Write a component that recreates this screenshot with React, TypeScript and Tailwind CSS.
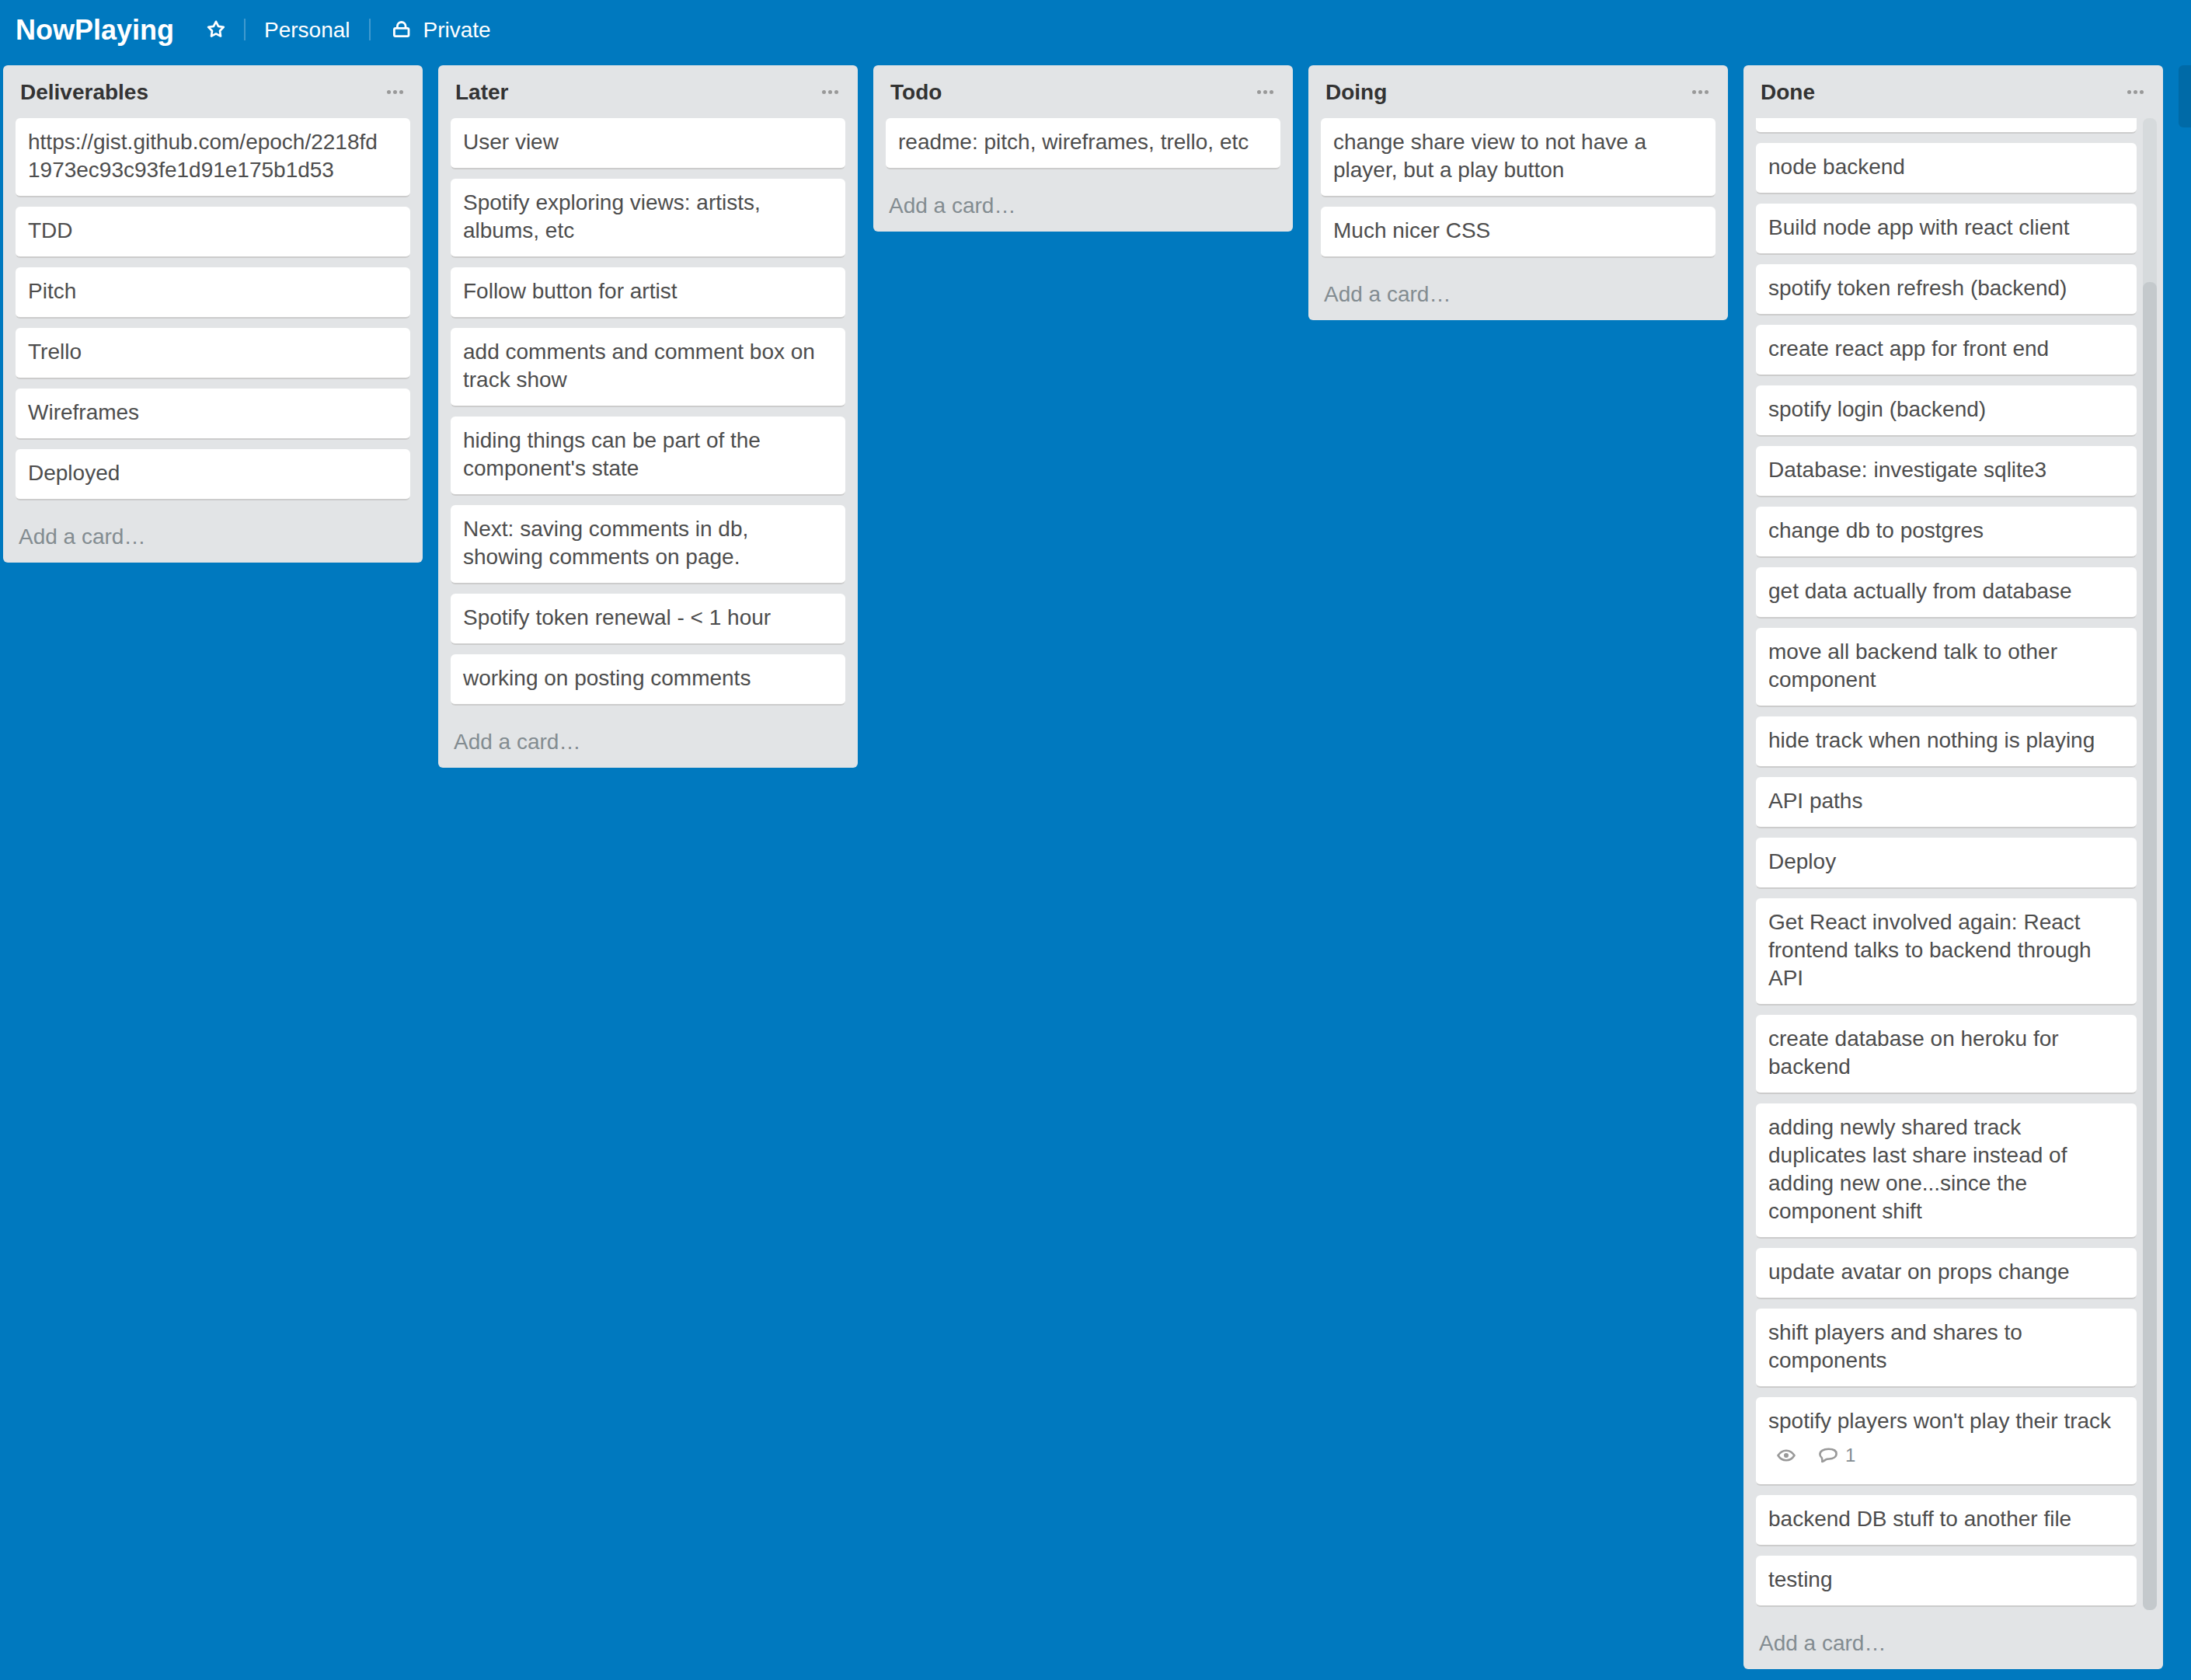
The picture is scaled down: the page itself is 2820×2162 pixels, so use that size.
import React from "react";

type CardData = { text: string; comments?: number };
type ListData = { title: string; cards: CardData[]; scrolled?: boolean };

const toCards = (texts: string[]): CardData[] => texts.map((text) => ({ text }));

const LISTS: ListData[] = [
  {
    title: "Deliverables",
    cards: toCards([
      "https://gist.github.com/epoch/2218fd\n1973ec93c93fe1d91e175b1d53",
      "TDD",
      "Pitch",
      "Trello",
      "Wireframes",
      "Deployed",
    ]),
  },
  {
    title: "Later",
    cards: toCards([
      "User view",
      "Spotify exploring views: artists, albums, etc",
      "Follow button for artist",
      "add comments and comment box on track show",
      "hiding things can be part of the component's state",
      "Next: saving comments in db, showing comments on page.",
      "Spotify token renewal - < 1 hour",
      "working on posting comments",
    ]),
  },
  { title: "Todo", cards: toCards(["readme: pitch, wireframes, trello, etc"]) },
  {
    title: "Doing",
    cards: toCards(["change share view to not have a player, but a play button", "Much nicer CSS"]),
  },
  {
    title: "Done",
    scrolled: true,
    cards: [
      ...toCards([
        "",
        "node backend",
        "Build node app with react client",
        "spotify token refresh (backend)",
        "create react app for front end",
        "spotify login (backend)",
        "Database: investigate sqlite3",
        "change db to postgres",
        "get data actually from database",
        "move all backend talk to other component",
        "hide track when nothing is playing",
        "API paths",
        "Deploy",
        "Get React involved again: React frontend talks to backend through API",
        "create database on heroku for backend",
        "adding newly shared track duplicates last share instead of adding new one...since the component shift",
        "update avatar on props change",
        "shift players and shares to components",
      ]),
      { text: "spotify players won't play their track", comments: 1 },
      ...toCards(["backend DB stuff to another file", "testing"]),
    ],
  },
];

function StarIcon() {
  return (
    <svg viewBox="0 0 24 24" className="size-6" fill="none" stroke="currentColor" strokeWidth="2.7" strokeLinejoin="round" aria-hidden="true">
      <path d="M12 1.8L15.1 7.8L21.8 8.9L17 13.7L18 20.5L12 17.4L6 20.5L7 13.7L2.200 8.900L8.900 7.800z" />
    </svg>
  );
}

function LockIcon() {
  return (
    <svg viewBox="0 0 24 24" className="size-6" fill="none" stroke="currentColor" strokeWidth="2.8" strokeLinejoin="round" aria-hidden="true">
      <rect x="2.4" y="10.4" width="18.6" height="10.2" rx="1.6" />
      <path d="M6.4 10.4V7.800a5.300 5.300 0 0 1 10.600 0v2.600" />
    </svg>
  );
}

function EyeIcon() {
  return (
    <svg viewBox="0 0 24 16" className="h-4 w-6" fill="none" stroke="currentColor" strokeWidth="2.6" strokeLinejoin="round" aria-hidden="true">
      <path d="M1.500 8C4 4 7.700 1.700 12 1.700S20 4 22.500 8c-2.500 4-6.200 6.300-10.500 6.300S4 12 1.500 8z" />
      <circle cx="12" cy="8" r="3" fill="currentColor" stroke="none" />
    </svg>
  );
}

function CommentIcon() {
  return (
    <svg viewBox="0 0 24 20" className="h-5 w-6" fill="none" stroke="currentColor" strokeWidth="2.6" strokeLinejoin="round" aria-hidden="true">
      <path d="M12.500 1.800C18.600 1.800 22.600 4 22.600 7.800c0 4.400-4.500 6.500-9.500 6.700-1.600.1-3 .2-4.200.9-1.400 1-2.800 2.200-4.600 2.600.2-1.700.1-3.300-.5-4.900C2.200 11.600 1.400 10 1.400 8.400 1.400 4.200 6 1.800 12.500 1.800z" />
    </svg>
  );
}

function Card({ card }: { card: CardData }) {
  return (
    <li className="shrink-0">
      <a
        href="#"
        className="block min-h-[66px] rounded-md border-b-2 border-[#cccccc] bg-white px-4 pt-[13px] pb-[15px] whitespace-pre-line text-[#4d4d4d]"
      >
        {card.text}
        {card.comments !== undefined && (
          <span className="flex h-12 items-start gap-[30px] pt-[14px] pl-[11px] text-2xl leading-6 text-[#838c91]">
            <span className="flex h-6 items-center text-[#999999]">
              <EyeIcon />
            </span>
            <span className="flex h-6 items-center gap-[10px]">
              <span className="text-[#999999]">
                <CommentIcon />
              </span>
              {card.comments}
            </span>
          </span>
        )}
      </a>
    </li>
  );
}

function List({ list }: { list: ListData }) {
  return (
    <section className="flex max-h-full w-[540px] shrink-0 flex-col rounded-md bg-[#e2e4e6]">
      <header className="flex h-17 shrink-0 items-center justify-between pr-[25px] pl-[22px]">
        <h2 className="pt-[2px] font-bold text-[#333333]">{list.title}</h2>
        <button type="button" aria-label={`${list.title} actions`} className="flex gap-[3px] text-[#999999]">
          <span className="size-[5px] rounded-full bg-current" />
          <span className="size-[5px] rounded-full bg-current" />
          <span className="size-[5px] rounded-full bg-current" />
        </button>
      </header>
      <div className={list.scrolled ? "flex min-h-0 gap-2 pr-2 pl-4" : "flex min-h-0 px-4"}>
        <ul className="flex min-w-0 flex-1 flex-col justify-end gap-3 overflow-hidden pb-1">
          {list.cards.map((card, i) => (
            <Card key={i} card={card} />
          ))}
        </ul>
        {list.scrolled && (
          <div className="flex w-[18px] flex-col justify-end rounded-lg bg-[#d6dadc]">
            <div className="h-[89%] rounded-lg bg-[#c4c9cc]" />
          </div>
        )}
      </div>
      <button type="button" className="shrink-0 px-5 pt-[25px] pb-[15px] text-left text-[#838c91]">
        Add a card…
      </button>
    </section>
  );
}

export default function App() {
  return (
    <div className="flex h-screen flex-col overflow-hidden bg-[#0079bf] font-['Liberation_Sans',Arial,sans-serif] text-[28px] leading-9">
      <header className="flex h-19 shrink-0 items-center px-5 text-white">
        <h1 className="pt-[2px] text-4xl font-bold">NowPlaying</h1>
        <button type="button" aria-label="Star board" className="ml-[42px]">
          <StarIcon />
        </button>
        <span className="mx-6 h-7 w-[2px] bg-white/25" />
        <a href="#" className="pt-[2px]">
          Personal
        </a>
        <span className="mx-6 h-7 w-[2px] bg-white/25" />
        <button type="button" className="flex items-center gap-4 pl-1">
          <LockIcon />
          <span className="pt-[2px]">Private</span>
        </button>
      </header>
      <main className="flex min-h-0 flex-1 items-start gap-5 pt-2 pb-[14px] pl-1">
        {LISTS.map((list) => (
          <List key={list.title} list={list} />
        ))}
        <button type="button" aria-label="Add a list" className="h-20 w-[540px] shrink-0 rounded-md bg-[#006aa7]" />
      </main>
    </div>
  );
}
